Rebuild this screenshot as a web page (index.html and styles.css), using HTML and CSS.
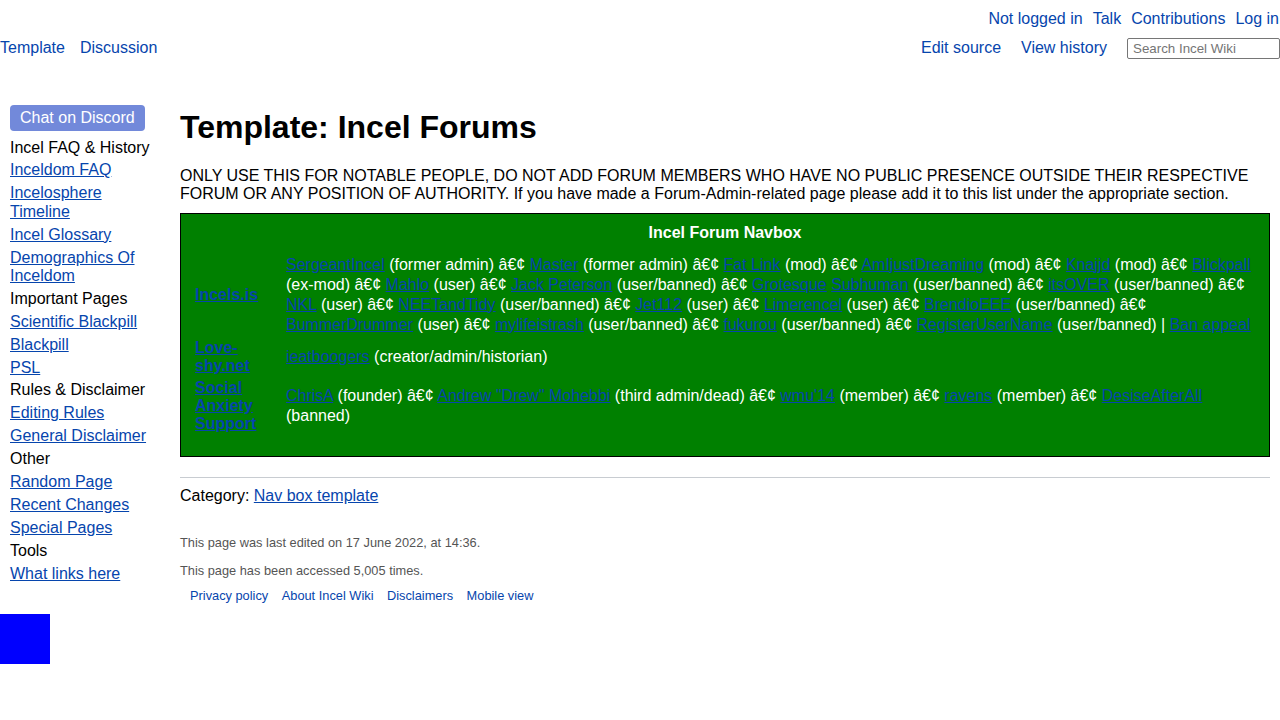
FILE: index.html
```html
<!DOCTYPE html>
<html lang="en">
<head>
<meta charset="utf-8">
<title>Template: Incel Forums - Incel Wiki</title>
<link rel="stylesheet" href="styles.css">
</head>
<body>
<header class="top">
  <div class="personal">
    <a href="#">Not logged in</a>
    <a href="#">Talk</a>
    <a href="#">Contributions</a>
    <a href="#">Log in</a>
  </div>
  <div class="tabs-row">
    <div class="tabs-left">
      <a href="#">Template</a>
      <a href="#">Discussion</a>
    </div>
    <div class="tabs-right">
      <a href="#">Edit source</a>
      <a href="#">View history</a>
      <input class="search" type="search" placeholder="Search Incel Wiki">
    </div>
  </div>
</header>

<div class="layout">
  <aside class="sidebar">
    <nav class="side-nav">
      <a class="discord" href="#">Chat on Discord</a>
      <ul class="side-list">
        <li class="side-head">Incel FAQ &amp; History</li>
        <li><a href="#">Inceldom FAQ</a></li>
        <li><a href="#">Incelosphere Timeline</a></li>
        <li><a href="#">Incel Glossary</a></li>
        <li><a href="#">Demographics Of Inceldom</a></li>
        <li class="side-head">Important Pages</li>
        <li><a href="#">Scientific Blackpill</a></li>
        <li><a href="#">Blackpill</a></li>
        <li><a href="#">PSL</a></li>
        <li class="side-head">Rules &amp; Disclaimer</li>
        <li><a href="#">Editing Rules</a></li>
        <li><a href="#">General Disclaimer</a></li>
        <li class="side-head">Other</li>
        <li><a href="#">Random Page</a></li>
        <li><a href="#">Recent Changes</a></li>
        <li><a href="#">Special Pages</a></li>
        <li class="side-head">Tools</li>
        <li><a href="#">What links here</a></li>
      </ul>
    </nav>
    <div class="blue-square"></div>
  </aside>

  <main class="content">
    <h1 class="title">Template: Incel Forums</h1>
    <p class="intro">ONLY USE THIS FOR NOTABLE PEOPLE, DO NOT ADD FORUM MEMBERS WHO HAVE NO PUBLIC PRESENCE OUTSIDE THEIR RESPECTIVE FORUM OR ANY POSITION OF AUTHORITY. If you have made a Forum-Admin-related page please add it to this list under the appropriate section.</p>

    <div class="navbox">
      <table class="navbox-table">
        <tr>
          <th class="navbox-title" colspan="2">Incel Forum Navbox</th>
        </tr>
        <tr>
          <th class="navbox-group"><a href="#">Incels.is</a></th>
          <td class="navbox-list"><a href="#">SergeantIncel</a> (former admin) â€¢ <a href="#">Master</a> (former admin) â€¢ <a href="#">Fat Link</a> (mod) â€¢ <a href="#">AmIjustDreaming</a> (mod) â€¢ <a href="#">Knajjd</a> (mod) â€¢ <a href="#">Blickpall</a> (ex-mod) â€¢ <a href="#">Mahlo</a> (user) â€¢ <a href="#">Jack Peterson</a> (user/banned) â€¢ <a href="#">Grotesque</a> <a href="#">Subhuman</a> (user/banned) â€¢ <a href="#">itsOVER</a> (user/banned) â€¢ <a href="#">NKL</a> (user) â€¢ <a href="#">NEETandTidy</a> (user/banned) â€¢ <a href="#">Jet112</a> (user) â€¢ <a href="#">Limerencel</a> (user) â€¢ <a href="#">BrendioEEE</a> (user/banned) â€¢ <a href="#">BummerDrummer</a> (user) â€¢ <a href="#">mylifeistrash</a> (user/banned) â€¢ <a href="#">fukurou</a> (user/banned) â€¢ <a href="#">RegisterUserName</a> (user/banned) | <a href="#">Ban appeal</a></td>
        </tr>
        <tr>
          <th class="navbox-group"><a href="#">Love-shy.net</a></th>
          <td class="navbox-list"><a href="#">ieatboogers</a> (creator/admin/historian)</td>
        </tr>
        <tr>
          <th class="navbox-group"><a href="#">Social Anxiety Support</a></th>
          <td class="navbox-list"><a href="#">ChrisA</a> (founder) â€¢ <a href="#">Andrew "Drew" Mohebbi</a> (third admin/dead) â€¢ <a href="#">wmu'14</a> (member) â€¢ <a href="#">ravens</a> (member) â€¢ <a href="#">DesiseAfterAll</a> (banned)</td>
        </tr>
      </table>
    </div>

    <div class="catlinks">Category: <a href="#">Nav box template</a></div>

    <footer class="footer">
      <div class="footer-info">This page was last edited on 17 June 2022, at 14:36.</div>
      <div class="footer-info">This page has been accessed 5,005 times.</div>
      <div class="footer-places">
        <a href="#">Privacy policy</a>
        <a href="#">About Incel Wiki</a>
        <a href="#">Disclaimers</a>
        <a href="#">Mobile view</a>
      </div>
    </footer>
  </main>
</div>
</body>
</html>
```

FILE: styles.css
```css
html, body {
  margin: 0;
  padding: 0;
  background: #ffffff;
}

body {
  font-family: "Liberation Sans", Arial, Helvetica, sans-serif;
  font-size: 16px;
  line-height: 18.4px;
  color: #000000;
}

a {
  color: #0645ad;
}

/* ---------- header ---------- */
.top {
  display: flex;
  flex-direction: column;
}

.personal {
  display: flex;
  justify-content: flex-end;
  gap: 10px;
  padding-top: 9px;
  padding-right: 1px;
  line-height: 19px;
}

.personal a,
.tabs-row a {
  text-decoration: none;
}

.tabs-row {
  display: flex;
  justify-content: space-between;
  align-items: flex-start;
  margin-top: 10px;
  line-height: 19px;
}

.tabs-left {
  display: flex;
  gap: 15px;
}

.tabs-right {
  display: flex;
  align-items: flex-start;
  gap: 20px;
}

.search {
  box-sizing: border-box;
  width: 153px;
  height: 21px;
  margin: 0;
  padding: 1px 5px;
  border: 1px solid #767676;
  border-radius: 2px;
  font-family: "Liberation Sans", Arial, sans-serif;
  font-size: 13.33px;
  color: #000;
  background: #fff;
}

.search::placeholder {
  color: #757575;
}

/* ---------- layout ---------- */
.layout {
  display: flex;
  margin-top: 41px;
}

.sidebar {
  flex: 0 0 180px;
  display: flex;
  flex-direction: column;
}

.side-nav {
  display: flex;
  flex-direction: column;
  align-items: flex-start;
  width: 150px;
  padding: 5px 10px 0 10px;
}

.discord {
  display: block;
  background: #7289da;
  color: #ffffff;
  text-decoration: none;
  line-height: 26px;
  height: 26px;
  padding: 0 10px;
  border-radius: 4px;
  margin-bottom: 7.5px;
}

.side-list {
  list-style: none;
  margin: 0;
  padding: 0;
  display: flex;
  flex-direction: column;
  gap: 4.5px;
}

.side-list li {
  line-height: 18.4px;
}

.side-head {
  color: #000;
}

.blue-square {
  width: 50px;
  height: 50px;
  background: #0000ff;
  margin-top: 31px;
}

/* ---------- content ---------- */
.content {
  flex: 1 1 auto;
  padding-right: 10px;
  min-width: 0;
}

.title {
  margin: 0;
  padding-top: 8px;
  font-size: 32px;
  line-height: 38px;
  font-weight: bold;
}

.intro {
  margin: 20.5px 0 0 0;
  line-height: 18.4px;
}

.navbox {
  margin-top: 9.5px;
  border: 1px solid #000;
  background: #008000;
  color: #ffffff;
  padding-bottom: 21px;
}

.navbox-table {
  width: 100%;
  border-collapse: collapse;
  border-spacing: 0;
}

.navbox-title {
  padding: 9px 0 11px 0;
  line-height: 19px;
  font-weight: bold;
  text-align: center;
}

.navbox-group {
  width: 72px;
  padding: 2px 19px 2px 14px;
  text-align: left;
  vertical-align: middle;
  font-weight: bold;
  line-height: 18px;
}

.navbox-list {
  padding: 2px 8px 2px 0;
  vertical-align: middle;
  line-height: 20px;
}

.catlinks {
  margin-top: 20px;
  border-top: 1px solid #c8ccd1;
  padding-top: 9px;
  line-height: 18.4px;
}

.footer {
  display: flex;
  flex-direction: column;
  margin-top: 29.5px;
  font-size: 12.8px;
  line-height: 15px;
  color: #555555;
}

.footer-info + .footer-info {
  margin-top: 13px;
}

.footer-places {
  display: flex;
  gap: 13.5px;
  margin-top: 10px;
  padding-left: 10px;
}

.footer-places a {
  text-decoration: none;
}
```
